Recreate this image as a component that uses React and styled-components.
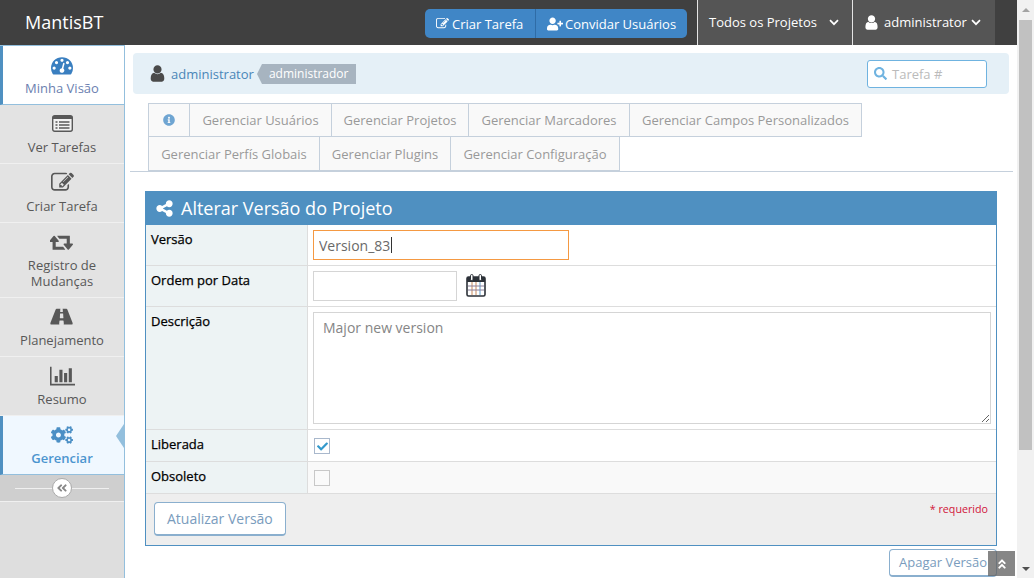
import React from 'react';
import styled, { createGlobalStyle } from 'styled-components';
import { FaSearch, FaInfoCircle, FaAngleDoubleLeft, FaAngleDoubleUp, FaCheck, FaCogs, FaUserPlus } from 'react-icons/fa';

const USER_PATH = 'M1536 1399q0 109-62.5 187t-150.5 78h-854q-88 0-150.5-78t-62.5-187q0-85 8.5-160.5t31.5-152 58.5-131 94-89 134.5-34.5q131 128 313 128t313-128q76 0 134.5 34.5t94 89 58.5 131 31.5 152 8.5 160.5zm-256-887q0 159-112.5 271.5t-271.5 112.5-271.5-112.5-112.5-271.5 112.5-271.5 271.5-112.5 271.5 112.5 112.5 271.5z';
const GAUGE_PATH = 'M384 1152q0-53-37.5-90.5t-90.5-37.5-90.5 37.5-37.5 90.5 37.5 90.5 90.5 37.5 90.5-37.5 37.5-90.5zm192-448q0-53-37.5-90.5t-90.5-37.5-90.5 37.5-37.5 90.5 37.5 90.5 90.5 37.5 90.5-37.5 37.5-90.5zm428 481l101-382q6-26-7.5-48.5t-38.5-29.5-48 6.5-30 39.5l-101 382q-60 5-107 43.5t-63 98.5q-20 77 20 146t117 89 146-20 89-117q16-60-6-117t-72-91zm660-33q0-53-37.5-90.5t-90.5-37.5-90.5 37.5-37.5 90.5 37.5 90.5 90.5 37.5 90.5-37.5 37.5-90.5zm-640-640q0-53-37.5-90.5t-90.5-37.5-90.5 37.5-37.5 90.5 37.5 90.5 90.5 37.5 90.5-37.5 37.5-90.5zm448 192q0-53-37.5-90.5t-90.5-37.5-90.5 37.5-37.5 90.5 37.5 90.5 90.5 37.5 90.5-37.5 37.5-90.5zm320 448q0 261-141 483-19 29-54 29h-1402q-35 0-54-29-141-221-141-483 0-182 71-348t191-286 286-191 348-71 348 71 286 191 191 286 71 348z';
const CHART_PATH = 'M640 896v512h-256v-512h256zm384-512v1024h-256v-1024h256zm1024 1152v128h-2048v-1536h128v1408h1920zm-640-896v768h-256v-768h256zm384-384v1152h-256v-1152h256z';
const EDIT_PATH = 'M888 1184l116-116-152-152-116 116v56h96v96h56zm440-720q-16-16-33 1l-350 350q-17 17-1 33t33-1l350-350q17-17 1-33zm80 594v190q0 119-84.5 203.5t-203.5 84.5h-832q-119 0-203.5-84.5t-84.5-203.5v-832q0-119 84.5-203.5t203.5-84.5h832q63 0 117 25 15 7 18 23 3 17-9 29l-49 49q-14 14-32 8-23-6-45-6h-832q-66 0-113 47t-47 113v832q0 66 47 113t113 47h832q66 0 113-47t47-113v-126q0-13 9-22l64-64q15-15 35-7t20 29zm-96-738l288 288-672 672h-288v-288zm444 132l-92 92-288-288 92-92q28-28 68-28t68 28l152 152q28 28 28 68t-28 68z';
const RETWEET_PATH = 'M1216 1504q0 13-9.5 22.5t-22.5 9.5h-960q-8 0-13.5-2t-9-7-5.5-8-3-11.5-1-11.5v-600h-192q-26 0-45-19t-19-45q0-24 15-41l320-384q19-22 49-22t49 22l320 384q15 17 15 41 0 26-19 45t-45 19h-192v384h576q16 0 25 11l160 192q7 10 7 21zm640-416q0 24-15 41l-320 384q-20 23-49 23t-49-23l-320-384q-15-17-15-41 0-26 19-45t45-19h192v-384h-576q-16 0-25-12l-160-192q-7-9-7-20 0-13 9.5-22.5t22.5-9.5h960q8 0 13.5 2t9 7 5.5 8 3 11.5 1 11.5v600h192q26 0 45 19t19 45z';
const ROAD_PATH = 'M1071 964v-4l-16-320q-1-13-11-22.5t-23-9.5h-186q-13 0-23 9.5t-11 22.5l-16 320v4q-1 12 8 20t21 8h244q12 0 21-8t8-20zm759 467q0 73-46 73h-704q13 0 22-9.5t8-22.5l-20-256q-1-13-11-22.5t-23-9.5h-272q-13 0-23 9.5t-11 22.5l-20 256q-1 13 8 22.5t22 9.5h-704q-46 0-46-73 0-54 26-116l417-1044q8-19 26-33t38-14h339q-13 0-23 9.5t-11 22.5l-15 192q-1 14 8 23t22 9h166q13 0 22-9t8-23l-15-192q-1-13-11-22.5t-23-9.5h339q20 0 38 14t26 33l417 1044q26 62 26 116z';
const SHARE_PATH = 'M1344 1024q133 0 226.5 93.5t93.5 226.5-93.5 226.5-226.5 93.5-226.5-93.5-93.5-226.5q0-12 2-34l-360-180q-92 86-218 86-133 0-226.5-93.5t-93.5-226.5 93.5-226.5 226.5-93.5q126 0 218 86l360-180q-2-22-2-34 0-133 93.5-226.5t226.5-93.5 226.5 93.5 93.5 226.5-93.5 226.5-226.5 93.5q-126 0-218-86l-360 180q2 22 2 34t-2 34l360 180q92-86 218-86z';

const Glyph = ({ d, w = 1792, size, width }) => (
  <svg width={width || size} height={size} viewBox={`0 0 ${w} 1792`} fill="currentColor"><path d={d} /></svg>
);
const Chevron = () => (
  <svg width="10" height="7" viewBox="0 0 10 7" fill="none" stroke="currentColor" strokeWidth="1.7"><path d="M1 1.2l4 4 4-4" /></svg>
);
const ListIcon = () => (
  <svg width="21" height="17" viewBox="0 0 21 17">
    <rect x="0.7" y="0.7" width="19.6" height="15.6" rx="2" fill="#f2f2f2" stroke="#585858" strokeWidth="1.4" />
    <rect x="1" y="1" width="19" height="3" fill="#585858" />
    <path d="M3.5 7h2M3.5 10h2M3.5 13h2M7 7h10.5M7 10h10.5M7 13h10.5" stroke="#585858" strokeWidth="1.4" />
  </svg>
);
const CalendarIcon = () => (
  <svg width="20" height="23" viewBox="0 0 20 23">
    <rect x="1" y="3" width="18" height="19" rx="1.5" fill="#fff" stroke="#2c3138" strokeWidth="1.6" />
    <rect x="1" y="3" width="18" height="5" fill="#2c3138" />
    <rect x="4.5" y="0.5" width="2.5" height="6" rx="1.2" fill="#fff" stroke="#2c3138" />
    <rect x="13" y="0.5" width="2.5" height="6" rx="1.2" fill="#fff" stroke="#2c3138" />
    <path d="M6 8v13M10 8v13" stroke="#c9895a" strokeWidth="1" />
    <path d="M14 8v13" stroke="#5a9ac9" strokeWidth="1" />
    <path d="M2 12h16M2 16h16" stroke="#8a7f9a" strokeWidth="1" />
  </svg>
);

const GlobalStyle = createGlobalStyle`
  html, body { margin: 0; height: 100%; overflow: hidden; }
  body { font-family: "Open Sans", "Liberation Sans", sans-serif; font-size: 13px; color: #393939; background: #fff; }
  * { box-sizing: border-box; }
`;

const Screen = styled.div`
  width: 1034px;
  height: 578px;
  display: flex;
  overflow: hidden;
  position: relative;
`;
const Page = styled.div`
  width: 1017px;
  display: flex;
  flex-direction: column;
`;
const Scrollbar = styled.div`
  width: 17px;
  background: #f1f1f1;
  display: flex;
  flex-direction: column;
  align-items: center;
`;
const ScrollArrow = styled.div`
  width: 0;
  height: 0;
  margin: 8px 0 7px;
  border-left: 4px solid transparent;
  border-right: 4px solid transparent;
  border-${p => (p.$down ? 'top' : 'bottom')}: 4px solid ${p => (p.$down ? '#505050' : '#a3a3a3')};
`;
const ScrollTrack = styled.div`
  flex: 1;
  width: 100%;
  padding: 1px 2px 109px;
  display: flex;
`;
const ScrollThumb = styled.div`
  flex: 1;
  background: #c1c1c1;
`;

const Navbar = styled.header`
  height: 45px;
  background: #404040;
  display: flex;
  align-items: stretch;
  padding: 0 22px 0 25px;
`;
const Brand = styled.div`
  color: #fff;
  font-size: 18px;
  line-height: 45px;
  margin-right: auto;
`;
const ButtonGroup = styled.div`
  display: flex;
  height: 29px;
  margin: 9px 10px 0 0;
`;
const NavButton = styled.div`
  width: ${p => p.$width}px;
  background: #4086c6;
  color: #fff;
  font-size: 13px;
  display: flex;
  align-items: center;
  gap: ${p => p.$gap}px;
  padding-left: 11px;
  border-radius: ${p => (p.$last ? '0 5px 5px 0' : '5px 0 0 5px')};
  border-left: ${p => (p.$last ? '1px solid #2f6ca6' : 'none')};
`;
const NavMenu = styled.div`
  background: #555;
  border-left: 1px solid #e4e4e4;
  color: #fff;
  font-size: 13px;
  width: ${p => p.$width}px;
  padding-left: ${p => p.$pad}px;
  padding-bottom: 1px;
  display: flex;
  align-items: center;
  gap: ${p => p.$gap}px;
`;

const Body = styled.div`
  flex: 1;
  display: flex;
  min-height: 0;
`;
const Sidebar = styled.nav`
  width: 125px;
  background: #dedede;
  border-right: 1px solid #93bfdd;
  border-top: 1px solid #93bfdd;
  display: flex;
  flex-direction: column;
  flex-shrink: 0;
  position: relative;
`;
const NavItem = styled.div`
  height: ${p => p.$height || 59}px;
  padding-top: 7px;
  border-bottom: 1px solid ${p => (p.$active ? '#93bfdd' : '#f0f0f0')};
  border-left: ${p => (p.$active ? '3px solid #4f90c1' : 'none')};
  background: ${p => (p.$current ? '#f0f8ff' : p.$active ? '#fff' : '#e3e3e3')};
  color: ${p => (p.$current ? '#4b95cf' : p.$active ? '#6b7fb0' : '#585858')};
  font-weight: ${p => (p.$current ? 600 : 400)};
  text-align: center;
  font-size: 13px;
  line-height: 16px;
  position: relative;
  padding-right: ${p => (p.$active ? '3px' : '0')};
`;
const NavIcon = styled.div`
  height: 23px;
  display: flex;
  align-items: center;
  justify-content: center;
  margin-bottom: 4px;
  font-size: 22px;
  color: ${p => p.$color || '#585858'};
`;
const ActiveArrow = styled.span`
  position: absolute;
  right: 0;
  top: 8px;
  width: 0;
  height: 0;
  border-top: 12px solid transparent;
  border-bottom: 12px solid transparent;
  border-right: 8px solid #93bfdd;
`;
const Toggler = styled.div`
  height: 27px;
  background: #cfcfcf;
  border-bottom: 1px solid #f0f0f0;
  display: flex;
  align-items: center;
  justify-content: center;
  position: relative;
  &::before {
    content: '';
    position: absolute;
    left: 15px;
    right: 15px;
    top: 13px;
    border-top: 1px solid #f0f0f0;
  }
`;
const ToggleButton = styled.div`
  width: 20px;
  height: 20px;
  border-radius: 50%;
  background: #fff;
  border: 1px solid #aaa;
  color: #888;
  display: flex;
  align-items: center;
  justify-content: center;
  font-size: 12px;
  position: relative;
`;

const Main = styled.main`
  flex: 1;
  min-width: 0;
  padding: 8px 4px 0 4px;
  display: flex;
  flex-direction: column;
`;
const Breadcrumbs = styled.div`
  height: 41px;
  margin: 0 4px 0 4px;
  background: #e5f0f7;
  border-radius: 4px;
  display: flex;
  align-items: center;
  padding: 0 22px 0 17px;
`;
const CrumbUser = styled.span`
  color: #4a4a4a;
  display: flex;
  margin-right: 4px;
  margin-left: -2px;
`;
const CrumbLink = styled.span`
  color: #4a86b8;
  font-size: 13px;
`;
const Badge = styled.span`
  margin-left: 8px;
  height: 20px;
  width: 94px;
  background: #a7b4c0;
  color: #fff;
  font-size: 12px;
  line-height: 19px;
  padding-left: 7px;
  position: relative;
  &::before {
    content: '';
    position: absolute;
    left: -5px;
    top: 0;
    border-top: 10px solid transparent;
    border-bottom: 10px solid transparent;
    border-right: 5px solid #a7b4c0;
  }
`;
const SearchBox = styled.div`
  margin-left: auto;
  width: 120px;
  height: 28px;
  background: #fff;
  border: 1px solid #6fb3e0;
  border-radius: 3px;
  display: flex;
  align-items: center;
  padding-left: 6px;
  gap: 5px;
  color: #6fb3e0;
  font-size: 13px;
`;
const SearchHint = styled.span`
  color: #bbb;
  font-size: 13px;
`;

const TabsBlock = styled.div`
  margin: 9px 0 0 1px;
  padding-left: 18px;
  border-bottom: 1px solid #c5d0dc;
  height: 69px;
`;
const TabRow = styled.div`
  display: flex;
  height: 34px;
`;
const Tab = styled.div`
  width: ${p => p.$width}px;
  background: #f9f9f9;
  border: 1px solid #c5d0dc;
  border-left-width: ${p => (p.$first ? 1 : 0)}px;
  border-top-width: ${p => (p.$top ? 1 : 0)}px;
  color: #999;
  font-size: 13px;
  display: flex;
  align-items: center;
  justify-content: center;
`;
const InfoGlyph = styled.span`
  color: #6fa5d2;
  display: flex;
  font-size: 12px;
`;

const Widget = styled.section`
  margin: 19px 16px 0 16px;
  border: 1px solid #4f90c1;
  border-top: none;
  background: #fff;
`;
const WidgetHeader = styled.div`
  height: 34px;
  margin: 0 -1px;
  background: #4f90c1;
  color: #fff;
  font-size: 18px;
  display: flex;
  align-items: center;
  padding-left: 10px;
  gap: 7px;
`;
const FormRow = styled.div`
  display: grid;
  grid-template-columns: 162px 1fr;
  height: ${p => p.$height}px;
  border-bottom: 1px solid #ddd;
  background: ${p => (p.$shade ? '#f9f9f9' : '#fff')};
`;
const Label = styled.div`
  background: #edf3f4;
  border-right: 1px solid #ddd;
  color: #000;
  font-size: 13px;
  -webkit-text-stroke: 0.25px #000;
  padding: 5px 0 0 5px;
`;
const FieldCell = styled.div`
  padding: ${p => p.$top || 5}px 5px 0 5px;
  display: flex;
  align-items: flex-start;
  gap: 9px;
`;
const CalendarSlot = styled.span`
  display: flex;
  margin-top: 3px;
`;
const CaretWrap = styled.div`
  position: relative;
  width: ${p => p.$width}px;
`;
const TextInput = styled.input`
  display: block;
  width: 100%;
  height: 30px;
  border: 1px solid ${p => (p.$focus ? '#f59942' : '#d5d5d5')};
  padding: 0 5px;
  font: 14px "Open Sans", sans-serif;
  color: #696969;
  caret-color: transparent;
  outline: none;
  background: #fff;
`;
const Caret = styled.span`
  position: absolute;
  left: 78px;
  top: 7px;
  width: 1px;
  height: 16px;
  background: #333;
`;
const TextArea = styled.textarea`
  display: block;
  width: 100%;
  height: 112px;
  border: 1px solid #d5d5d5;
  padding: 5px 9px;
  font: 14px "Open Sans", sans-serif;
  color: #858585;
  outline: none;
  background: #fff;
`;
const CheckBox = styled.span`
  width: 16px;
  height: 16px;
  margin-left: 1px;
  border: 1px solid ${p => (p.$checked ? '#a9b8cc' : '#c8c8c8')};
  background: ${p => (p.$checked ? '#fff' : '#fafafa')};
  color: #3399cc;
  display: flex;
  align-items: center;
  justify-content: center;
  font-size: 11px;
`;
const WidgetFooter = styled.div`
  height: 51px;
  background: #eee;
  display: flex;
  justify-content: space-between;
  padding: 8px 8px 0 8px;
`;
const ActionButton = styled.div`
  height: ${p => p.$height}px;
  background: #fff;
  border: 1px solid #8aafce;
  border-width: 1px 1px 2px;
  border-radius: 4px;
  color: #7a9cbd;
  font-size: ${p => p.$size}px;
  display: flex;
  align-items: center;
  justify-content: center;
  padding: 0 ${p => p.$pad}px ${p => p.$lift || 0}px;
`;
const Required = styled.span`
  color: #d1143a;
  font-size: 10.7px;
`;
const LowerActions = styled.div`
  display: flex;
  justify-content: flex-end;
  margin: 3px 16px 0 0;
`;
const BackToTop = styled.div`
  position: absolute;
  left: 988px;
  top: 551px;
  width: 27px;
  height: 25px;
  background: rgba(100, 100, 100, 0.78);
  color: #fff;
  display: flex;
  align-items: center;
  justify-content: center;
  font-size: 12px;
`;

export default function App() {
  return (
    <Screen>
      <GlobalStyle />
      <Page>
        <Navbar>
          <Brand>MantisBT</Brand>
          <ButtonGroup>
            <NavButton $width={110} $gap={3}><Glyph d={EDIT_PATH} size={13} /> Criar Tarefa</NavButton>
            <NavButton $last $width={152} $gap={2}><FaUserPlus size={16} /> Convidar Usuários</NavButton>
          </ButtonGroup>
          <NavMenu $width={155} $pad={11} $gap={12}>Todos os Projetos <Chevron /></NavMenu>
          <NavMenu $width={143} $pad={10} $gap={4}><Glyph d={USER_PATH} size={17} /> administrator <Chevron /></NavMenu>
        </Navbar>
        <Body>
          <Sidebar>
            <NavItem $active><NavIcon $color="#3a7fc0"><Glyph d={GAUGE_PATH} size={22} /></NavIcon>Minha Visão</NavItem>
            <NavItem><NavIcon><ListIcon /></NavIcon>Ver Tarefas</NavItem>
            <NavItem><NavIcon><Glyph d={EDIT_PATH} size={23} /></NavIcon>Criar Tarefa</NavItem>
            <NavItem $height={75}><NavIcon><Glyph d={RETWEET_PATH} w={1920} size={22} width={24} /></NavIcon>Registro de<br />Mudanças</NavItem>
            <NavItem><NavIcon><Glyph d={ROAD_PATH} w={1920} size={22} width={24} /></NavIcon>Planejamento</NavItem>
            <NavItem><NavIcon><Glyph d={CHART_PATH} w={2048} size={22} width={25} /></NavIcon>Resumo</NavItem>
            <NavItem $active $current><NavIcon $color="#4b8fc5"><FaCogs /></NavIcon>Gerenciar<ActiveArrow /></NavItem>
            <Toggler><ToggleButton><FaAngleDoubleLeft /></ToggleButton></Toggler>
          </Sidebar>
          <Main>
            <Breadcrumbs>
              <CrumbUser><Glyph d={USER_PATH} size={19} /></CrumbUser>
              <CrumbLink>administrator</CrumbLink>
              <Badge>administrador</Badge>
              <SearchBox><FaSearch /><SearchHint>Tarefa #</SearchHint></SearchBox>
            </Breadcrumbs>
            <TabsBlock>
              <TabRow>
                <Tab $first $top $width={42}><InfoGlyph><FaInfoCircle /></InfoGlyph></Tab>
                <Tab $top $width={142}>Gerenciar Usuários</Tab>
                <Tab $top $width={137}>Gerenciar Projetos</Tab>
                <Tab $top $width={161}>Gerenciar Marcadores</Tab>
                <Tab $top $width={232}>Gerenciar Campos Personalizados</Tab>
              </TabRow>
              <TabRow>
                <Tab $first $width={172}>Gerenciar Perfís Globais</Tab>
                <Tab $width={131}>Gerenciar Plugins</Tab>
                <Tab $width={169}>Gerenciar Configuração</Tab>
              </TabRow>
            </TabsBlock>
            <Widget>
              <WidgetHeader><Glyph d={SHARE_PATH} size={19} /> Alterar Versão do Projeto</WidgetHeader>
              <FormRow $height={41}>
                <Label>Versão</Label>
                <FieldCell>
                  <CaretWrap $width={256}>
                    <TextInput $focus defaultValue="Version_83" />
                    <Caret />
                  </CaretWrap>
                </FieldCell>
              </FormRow>
              <FormRow $height={41}>
                <Label>Ordem por Data</Label>
                <FieldCell>
                  <CaretWrap $width={144}><TextInput /></CaretWrap>
                  <CalendarSlot><CalendarIcon /></CalendarSlot>
                </FieldCell>
              </FormRow>
              <FormRow $height={123}>
                <Label>Descrição</Label>
                <FieldCell><TextArea defaultValue="Major new version" /></FieldCell>
              </FormRow>
              <FormRow $height={32}>
                <Label>Liberada</Label>
                <FieldCell $top={8}><CheckBox $checked><FaCheck /></CheckBox></FieldCell>
              </FormRow>
              <FormRow $height={32} $shade>
                <Label>Obsoleto</Label>
                <FieldCell $top={8}><CheckBox /></FieldCell>
              </FormRow>
              <WidgetFooter>
                <ActionButton $height={34} $size={14} $pad={12}>Atualizar Versão</ActionButton>
                <Required>* requerido</Required>
              </WidgetFooter>
            </Widget>
            <LowerActions>
              <ActionButton $height={28} $size={13} $pad={9} $lift={1}>Apagar Versão</ActionButton>
            </LowerActions>
          </Main>
        </Body>
      </Page>
      <Scrollbar>
        <ScrollArrow />
        <ScrollTrack><ScrollThumb /></ScrollTrack>
        <ScrollArrow $down />
      </Scrollbar>
      <BackToTop><FaAngleDoubleUp /></BackToTop>
    </Screen>
  );
}
